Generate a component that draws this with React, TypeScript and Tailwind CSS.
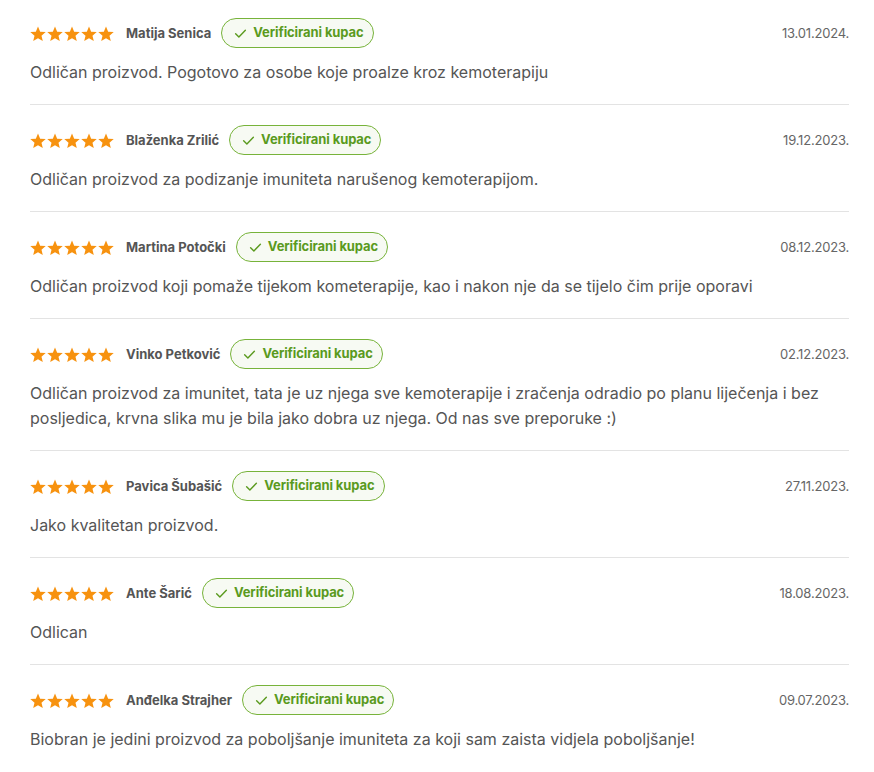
import React from "react";

const reviews = [
  { name: "Matija Senica", date: "13.01.2024.", text: "Odličan proizvod. Pogotovo za osobe koje proalze kroz kemoterapiju" },
  { name: "Blaženka Zrilić", date: "19.12.2023.", text: "Odličan proizvod za podizanje imuniteta narušenog kemoterapijom." },
  { name: "Martina Potočki", date: "08.12.2023.", text: "Odličan proizvod koji pomaže tijekom kometerapije, kao i nakon nje da se tijelo čim prije oporavi" },
  { name: "Vinko Petković", date: "02.12.2023.", text: "Odličan proizvod za imunitet, tata je uz njega sve kemoterapije i zračenja odradio po planu liječenja i bez posljedica, krvna slika mu je bila jako dobra uz njega. Od nas sve preporuke :)" },
  { name: "Pavica Šubašić", date: "27.11.2023.", text: "Jako kvalitetan proizvod." },
  { name: "Ante Šarić", date: "18.08.2023.", text: "Odlican" },
  { name: "Anđelka Strajher", date: "09.07.2023.", text: "Biobran je jedini proizvod za poboljšanje imuniteta za koji sam zaista vidjela poboljšanje!" },
];

function Star() {
  return (
    <svg width="16" height="16" viewBox="0.5 0.5 23 23">
      <path fill="#f7920f" d="M12 1.2l3.1 7.4 8 .6-6.1 5.2 1.9 7.8L12 18l-6.9 4.2 1.9-7.8L.9 9.2l8-.6z" />
    </svg>
  );
}

function Check() {
  return (
    <svg width="13" height="13" viewBox="0 0 24 24" fill="none" stroke="#5a9a1e" strokeWidth="2.6" strokeLinecap="round" strokeLinejoin="round">
      <path d="M3 12.5l6 6L21 6" />
    </svg>
  );
}

export default function App() {
  return (
    <div className="w-[874px] bg-white px-[30px] pr-[25px]" style={{ fontFamily: "Inter, 'Liberation Sans', sans-serif" }}>
      {reviews.map((r, i) => (
        <div
          key={i}
          className={`${i === 0 ? "pt-[18px]" : "pt-[20px]"} pb-[19px] ${i < reviews.length - 1 ? "border-b border-[#e3e3e3]" : ""}`}
        >
          <div className="flex h-[30px] items-center">
            <div className="flex gap-[1px] pt-[1px]">
              <Star /><Star /><Star /><Star /><Star />
            </div>
            <span className="ml-[12px] pt-[1px] text-[13px] font-bold text-[#555]">{r.name}</span>
            <span className="ml-[10px] flex h-[30px] items-center gap-[6px] rounded-full border border-[#77b33a] bg-[#f7faf3] pl-[12px] pr-[9px] text-[13px] font-bold tracking-[-0.1px] text-[#5a9a1e]">
              <Check />
              Verificirani kupac
            </span>
            <span className="ml-auto pt-[1px] text-[13px] tracking-[-0.2px] text-[#666]">{r.date}</span>
          </div>
          <p className="mt-[12px] text-[16px] leading-[25px] text-[#555]">{r.text}</p>
        </div>
      ))}
    </div>
  );
}
